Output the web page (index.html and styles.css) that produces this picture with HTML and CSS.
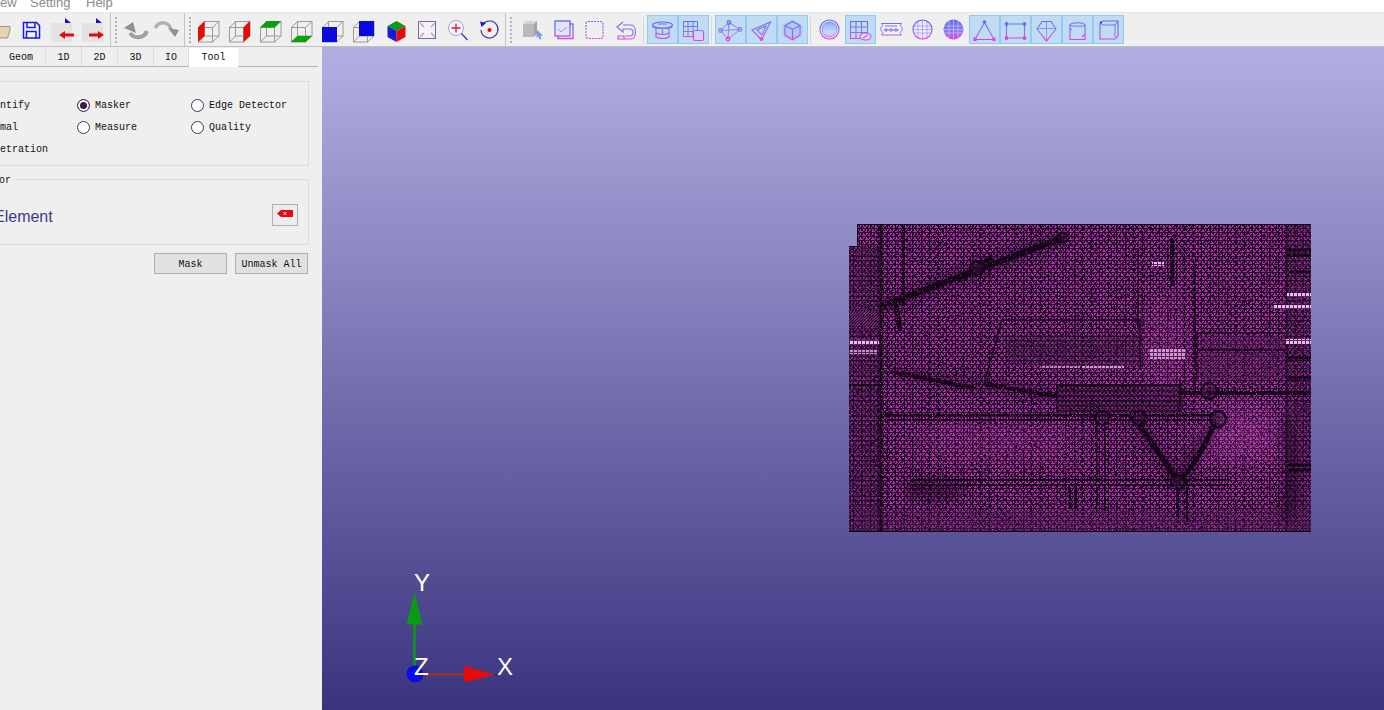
FILE: index.html
```html
<!DOCTYPE html>
<html lang="en">
<head>
<meta charset="utf-8">
<title>Mesh Tool</title>
<link rel="stylesheet" href="styles.css">
</head>
<body>
<svg class="defs" width="0" height="0" aria-hidden="true">
  <defs>
    <linearGradient id="g" gradientUnits="userSpaceOnUse" x1="0" y1="7" x2="0" y2="27">
      <stop offset="0" stop-color="#5f6cf2"/>
      <stop offset=".55" stop-color="#8a78ea"/>
      <stop offset="1" stop-color="#ea3ed8"/>
    </linearGradient>
    <linearGradient id="disc" gradientUnits="userSpaceOnUse" x1="0" y1="8" x2="0" y2="26">
      <stop offset="0" stop-color="#86a8f6"/>
      <stop offset=".6" stop-color="#c4d8f8"/>
      <stop offset="1" stop-color="#e8a8ec"/>
    </linearGradient>
    <symbol id="wire" overflow="visible">
      <g fill="none" stroke="#9a9a9a" stroke-width="1">
        <rect x=".5" y="6.5" width="14" height="14.5"/>
        <rect x="6.5" y=".5" width="14.5" height="14.5"/>
        <path d="M.5 6.500l6-6M14.500 6.500l6.500-6M.5 21l6-6M14.500 21l6.500-6"/>
      </g>
    </symbol>
    <pattern id="tri" width="6" height="8" patternUnits="userSpaceOnUse">
      <rect width="6" height="8" fill="#ac34a6"/>
      <path d="M0 .5H6M0 4.500H6M0 0L3 4L6 0M0 8L3 4L6 8" stroke="#2a0c30" stroke-width="1" fill="none" shape-rendering="crispEdges"/>
    </pattern>
    <pattern id="tri2" width="4" height="5" patternUnits="userSpaceOnUse">
      <rect width="4" height="5" fill="#8a2f88"/>
      <path d="M0 .5H4M0 0L2 3L4 0M0 5L2 3L4 5" stroke="#14061a" stroke-width="1" fill="none" shape-rendering="crispEdges"/>
    </pattern>
    <pattern id="vert" width="17" height="7" patternUnits="userSpaceOnUse">
      <path d="M3.500 0V5M11.500 2V7" stroke="#12061a" stroke-width="1" shape-rendering="crispEdges"/>
    </pattern>
    <pattern id="hatch" width="3" height="3" patternUnits="userSpaceOnUse">
      <rect width="3" height="3" fill="#7a2a7a"/>
      <path d="M0 3L3 0" stroke="#12061a" stroke-width="1"/>
    </pattern>
    <pattern id="bright" width="4" height="4" patternUnits="userSpaceOnUse">
      <rect width="4" height="4" fill="#f0b8f0"/>
      <path d="M0 .5H4M1 0V4" stroke="#5c2460" stroke-width="1" shape-rendering="crispEdges"/>
    </pattern>
    <filter id="specks" x="0" y="0" width="1" height="1" color-interpolation-filters="sRGB">
      <feTurbulence type="fractalNoise" baseFrequency=".85" numOctaves="2" seed="4"/>
      <feColorMatrix type="matrix" values="0 0 0 0 .1  0 0 0 0 .04  0 0 0 0 .12  14 0 0 0 -8.6"/>
    </filter>
    <filter id="dither" x="-5%" y="-5%" width="110%" height="110%" color-interpolation-filters="sRGB">
      <feTurbulence type="fractalNoise" baseFrequency=".8" numOctaves="2" seed="9" result="n"/>
      <feColorMatrix in="n" type="matrix" values="0 0 0 0 0  0 0 0 0 0  0 0 0 0 0  14 0 0 0 -4.5" result="m"/>
      <feComposite in="SourceGraphic" in2="m" operator="in"/>
    </filter>
    <filter id="soft" x="-20%" y="-20%" width="140%" height="140%"><feGaussianBlur stdDeviation="5"/></filter>
    <filter id="glow" x="-40%" y="-40%" width="180%" height="180%"><feGaussianBlur stdDeviation="14"/></filter>
    <clipPath id="meshclip"><path d="M857 224H1311V532H849V246H857Z"/></clipPath>
  </defs>
</svg>

<header class="menubar">
  <span class="menu-view">ew</span>
  <span class="menu-setting">Setting</span>
  <span class="menu-help">Help</span>
</header>

<nav class="toolbar">
  <div class="group first">
    <div class="tool clip"><svg class="ic shift" viewBox="1 3 29 27"><path d="M3 11.500h8l2 2h12v3.500l-2.500 8H3z" fill="#e6d6b0" stroke="#a09078"/></svg></div>
    <div class="tool"><svg class="ic" viewBox="1 3 29 27"><g fill="none" stroke="#1a1ad8" stroke-width="1.500"><path d="M7.500 9.500h13l3 3v12.500h-16z" fill="#f4f4ff"/><path d="M11 9.500v5h8v-5M10.500 25v-6.500h9.500V25"/></g></svg></div>
    <div class="tool gap-left"><svg class="ic" viewBox="1 3 29 27"><rect x="2" y="10" width="21" height="19" fill="#e3e3e3"/><path d="M16 5l6 5h-6z" fill="#1414d0"/><path d="M10 22l6-4v2.500h9v3h-9V26z" fill="#e80808"/></svg></div>
    <div class="tool narrow"><svg class="ic" viewBox="1 3 29 27"><rect x="2" y="10" width="21" height="19" fill="#e3e3e3"/><path d="M16 5l6 5h-6z" fill="#1414d0"/><path d="M24 22l-6-4v2.500H9v3h9V26z" fill="#e80808"/></svg></div>
  </div>

  <div class="group second">
    <i class="grip"></i>
    <div class="tool"><svg class="ic" viewBox="1 3 29 27"><path d="M27 18c-3 8-13 8-17 2" fill="none" stroke="#a0a0a0" stroke-width="4"/><path d="M4 15l9-6 3 11z" fill="#909090"/></svg></div>
    <div class="tool"><svg class="ic" viewBox="1 3 29 27"><path d="M4 15c4-7 13-7 16 1" fill="none" stroke="#b0b0b0" stroke-width="3.500"/><path d="M28 17l-11-2 7 9z" fill="#909090"/></svg></div>
  </div>

  <div class="group third">
    <i class="grip"></i>
    <div class="tool"><svg class="ic" viewBox="1 3 29 27"><g transform="translate(5 8)"><use href="#wire"/><path d="M0 6.500L6.500 0v15L0 21z" fill="#e60a0a"/></g></svg></div>
    <div class="tool"><svg class="ic" viewBox="1 3 29 27"><g transform="translate(5 8)"><use href="#wire"/><path d="M14.500 6.500L21 0v15l-6.500 6z" fill="#e60a0a"/></g></svg></div>
    <div class="tool"><svg class="ic" viewBox="1 3 29 27"><g transform="translate(5 8)"><use href="#wire"/><path d="M0 6.500L6.500 0H21l-6.500 6.500z" fill="#0aa00a"/></g></svg></div>
    <div class="tool"><svg class="ic" viewBox="1 3 29 27"><g transform="translate(5 8)"><use href="#wire"/><path d="M0 21l6.500-6H21l-6.500 6z" fill="#0aa00a"/></g></svg></div>
    <div class="tool"><svg class="ic" viewBox="1 3 29 27"><g transform="translate(5 8)"><use href="#wire"/><rect y="6" width="15" height="15" fill="#0a0ae0"/></g></svg></div>
    <div class="tool"><svg class="ic" viewBox="1 3 29 27"><g transform="translate(5 8)"><use href="#wire"/><rect x="6" width="15" height="15" fill="#0a0ae0"/></g></svg></div>
    <div class="tool gap-small"><svg class="ic" viewBox="1 3 29 27"><path d="M15.500 8l9 5-9 5-9-5z" fill="#0a9a1a"/><path d="M6.500 13l9 5v11l-9-5z" fill="#1818d8"/><path d="M24.500 13l-9 5v11l9-5z" fill="#e60a0a"/></svg></div>
    <div class="tool"><svg class="ic" viewBox="1 3 29 27"><rect x="6.500" y="8.500" width="17" height="17" fill="#f2f2f8" stroke="#6a6ab8"/><path d="M8 10l4 4M23 10l-4 4M8 24l4-4M23 24l-4-4" stroke="#e88888" stroke-width="1.300"/></svg></div>
    <div class="tool"><svg class="ic" viewBox="1 3 29 27"><circle cx="13" cy="15" r="7.500" fill="#f6f6ff" stroke="#a0a0d8"/><path d="M8.500 15h9M13 10.500v9" stroke="#e81010" stroke-width="1.300"/><path d="M18.500 20.500l6 6.500" stroke="#3a3ab0" stroke-width="1.300"/></svg></div>
    <div class="tool"><svg class="ic" viewBox="1 3 29 27"><path d="M9 11a8.500 8.500 0 1 1-2 6" fill="none" stroke="#3c3c9a" stroke-width="1.200"/><path d="M6 8.500l6 1.500-4.500 4z" fill="#1a1ac8"/><circle cx="15.500" cy="17" r="2" fill="#e00a0a"/></svg></div>
  </div>

  <div class="group fourth">
    <i class="grip"></i>
    <div class="tool"><svg class="ic" viewBox="1 3 29 27"><path d="M6 11l3-3h11l-3 3z" fill="#d4d4d4"/><path d="M6 11h11v13H6z" fill="#bababa"/><path d="M17 11l3-3v13l-3 3z" fill="#a4a4a4"/><path d="M20 17l6 5.500-2.500.5 1 3-2 .5-1-3-2 1.500z" fill="#7a9ae8"/></svg></div>
    <div class="tool"><svg class="ic" viewBox="1 3 29 27"><g fill="none" stroke="url(#g)" stroke-width="1.400"><rect x="7" y="8" width="15" height="15" fill="#e4e4f8"/><path d="M22 11h3v14.500H10V23"/><path d="M10 16l3 3 6-5" stroke-width=".8"/></g></svg></div>
    <div class="tool"><svg class="ic" viewBox="1 3 29 27"><rect x="7" y="8.500" width="17" height="17" rx="2" fill="none" stroke="url(#g)" stroke-width="1.200" stroke-dasharray="2 1"/></svg></div>
    <div class="tool"><svg class="ic" viewBox="1 3 29 27"><g fill="none" stroke="url(#g)" stroke-width="1.200"><path d="M13 9l-6 5 6 5v-3h7c4 0 4 7 0 7h-5"/><path d="M13 12h8c6 0 6 14 0 14H8M8 23h6v3H8z"/></g></svg></div>
    <i class="thin"></i>
    <div class="tool on"><svg class="ic" viewBox="1 3 29 27"><g fill="none" stroke="url(#g)" stroke-width="1.200"><ellipse cx="15.500" cy="12" rx="10" ry="3"/><path d="M6 12v2c3 2 16 2 19 0v-2M11 11h9"/><path d="M9 15v9c3 2 10 2 13 0v-9M15.500 15v6M9 20c3 2 10 2 13 0"/></g></svg></div>
    <div class="tool on"><svg class="ic" viewBox="1 3 29 27"><g fill="none" stroke="url(#g)" stroke-width="1"><path d="M5.500 8.500h14v15h-14zM10 8.500v15M15 8.500v15M5.500 13.500h14M5.500 18.500h14"/><rect x="15.500" y="17.500" width="10" height="10" rx="1.500" fill="#d8d4f0" stroke-width="1.200"/></g></svg></div>
    <i class="thin wide"></i>
    <div class="tool on"><svg class="ic" viewBox="1 3 29 27"><g fill="none" stroke="url(#g)" stroke-width="1.200"><path d="M14 9.500L25 16.500 13 26 5.500 17.500z M5.500 17.500L25 16.500 M14 9.500L13 26" stroke-width=".9"/><circle cx="14" cy="9.500" r="1.800"/><circle cx="25" cy="16.500" r="1.800"/><circle cx="5.500" cy="17.500" r="1.800"/><circle cx="13" cy="26" r="1.800"/></g></svg></div>
    <div class="tool on"><svg class="ic" viewBox="1 3 29 27"><g fill="none" stroke="url(#g)" stroke-width="1.200"><path d="M24.500 9L6 17l9.500 10zM20 13l-9 4 5 5z"/><circle cx="15.500" cy="26" r="1.300"/></g></svg></div>
    <div class="tool on"><svg class="ic" viewBox="1 3 29 27"><path d="M15.500 6.500l10 5.500v11l-10 5.500-10-5.500V12z" fill="#a8b8f0" opacity=".55"/><g fill="none" stroke="url(#g)" stroke-width="1.200"><path d="M15.500 8.500l7.500 4v9.500l-7.500 4.500-7.500-4.500v-9.500zM8 12.500l7.500 4 7.500-4M15.500 16.500v10"/></g></svg></div>
    <i class="thin wide"></i>
    <div class="tool"><svg class="ic" viewBox="1 3 29 27"><circle cx="15.500" cy="16.500" r="9.500" fill="#f0eeff" stroke="url(#g)" stroke-width="1.200"/><circle cx="15.500" cy="16.500" r="7.500" fill="url(#disc)" stroke="url(#g)" stroke-width=".8"/></svg></div>
    <div class="tool on"><svg class="ic" viewBox="1 3 29 27"><g fill="none" stroke="url(#g)" stroke-width="1.100"><path d="M5.500 8.500h17v17h-17zM11 8.500v17M16.500 8.500v17M5.500 14h17M5.500 19.500h17"/><ellipse cx="20.500" cy="23.500" rx="5.500" ry="3.500" fill="#e2dcf4"/><path d="M18 25l5-3"/></g></svg></div>
    <div class="tool"><svg class="ic" viewBox="1 3 29 27"><g fill="none" stroke="url(#g)" stroke-width="1"><path d="M5.500 10.500h20l-1.500 2 2 2v3l-2 2 1.500 2.500h-20l1.500-2.500-2-2v-3l2-2z" fill="#f4f2ff"/><path d="M9 13h12M8 17h15"/><circle cx="10" cy="17" r="1.300"/><circle cx="15" cy="17" r="1.300"/><circle cx="20" cy="17" r="1.300"/></g></svg></div>
    <div class="tool"><svg class="ic" viewBox="1 3 29 27"><circle cx="15.500" cy="16.500" r="9.500" fill="#eceaff" stroke="url(#g)" stroke-width="1.200"/><path d="M6 13h19M6 16.500h19M6 20h19M11 7.500v18M15.500 7v19M20 7.500v18" stroke="url(#g)" stroke-width=".5" fill="none"/></svg></div>
    <div class="tool"><svg class="ic" viewBox="1 3 29 27"><circle cx="15.500" cy="16.500" r="10" fill="url(#g)"/><path d="M6 13h19M6 16.500h19M6 20h19M11 7.500v18M15.500 7v19M20 7.500v18" stroke="#c8c8f8" stroke-width=".7" fill="none"/></svg></div>
    <div class="tool on"><svg class="ic" viewBox="1 3 29 27"><g fill="none" stroke="url(#g)" stroke-width="1.100"><path d="M15.500 9.500l-9.500 17h19z"/><circle cx="15.500" cy="9" r="1.300" fill="#6a6cf0"/><rect x="5" y="25" width="2" height="2.500" fill="#e040d8"/><rect x="24" y="25" width="2" height="2.500" fill="#e040d8"/></g></svg></div>
    <div class="tool on"><svg class="ic" viewBox="1 3 29 27"><g fill="none" stroke="url(#g)" stroke-width="1.200"><path d="M6.500 11h18v14h-18z"/><circle cx="6.500" cy="11" r="1.300" fill="#6a6cf0"/><circle cx="24.500" cy="11" r="1.300" fill="#6a6cf0"/><circle cx="6.500" cy="25" r="1.300" fill="#c04ade"/><circle cx="24.500" cy="25" r="1.300" fill="#c04ade"/></g></svg></div>
    <div class="tool on"><svg class="ic" viewBox="1 3 29 27"><g fill="none" stroke="url(#g)" stroke-width="1.100"><path d="M11 8.500h9l5 7.500-9.500 12L6 16z"/><path d="M15.500 8.500v19M6.500 15.500h18" stroke-width=".7"/></g></svg></div>
    <div class="tool on"><svg class="ic" viewBox="1 3 29 27"><g fill="none" stroke="url(#g)" stroke-width="1.200"><path d="M8 12c1-3 14-3 15 0v14.500H8zM8 12.500c3 1 12 1 15 0M8 16.500h2M23 21l-3 3"/></g></svg></div>
    <div class="tool on"><svg class="ic" viewBox="1 3 29 27"><g fill="none" stroke="url(#g)" stroke-width="1.200"><path d="M7 10l3-2h15v15l-3 3H7z"/><path d="M10 12h12v12M7 10l3 2M25 8l-3 4" stroke-width="1"/></g><circle cx="8" cy="9.500" r="1" fill="#2a2ae0"/></svg></div>
  </div>
</nav>

<main class="workspace">
  <aside class="panel">
    <div class="tabs">
      <span class="tab t-geom">Geom</span>
      <span class="tab">1D</span>
      <span class="tab">2D</span>
      <span class="tab">3D</span>
      <span class="tab t-io">IO</span>
      <span class="tab active">Tool</span>
    </div>
    <section class="box radios">
      <label class="radio"><i class="dot"></i>Identify</label>
      <label class="radio"><i class="dot sel"></i>Masker</label>
      <label class="radio"><i class="dot"></i>Edge Detector</label>
      <label class="radio"><i class="dot"></i>Normal</label>
      <label class="radio"><i class="dot"></i>Measure</label>
      <label class="radio"><i class="dot"></i>Quality</label>
      <label class="radio"><i class="dot"></i>Penetration</label>
    </section>
    <section class="box selector">
      <span class="legend">Selector</span>
      <span class="element">Element</span>
      <button class="erase" type="button" aria-label="Clear">
        <svg width="16" height="9" viewBox="0 0 16 9"><path d="M0 4.500L4 1h12v7H4z" fill="#e80814"/><path d="M6.500 3l3 3M9.500 3l-3 3" stroke="#fff" stroke-width="1"/></svg>
      </button>
    </section>
    <div class="actions">
      <button class="btn" type="button">Mask</button>
      <button class="btn" type="button">Unmask All</button>
    </div>
  </aside>

  <section class="viewport">
    <svg class="scene" viewBox="322 47 1062 663" width="1062" height="663">
      <g clip-path="url(#meshclip)">
        <rect x="849" y="224" width="462" height="308" fill="url(#tri)"/>
        <rect x="849" y="224" width="462" height="308" fill="url(#vert)"/>
        <!-- denser zones -->
        <rect x="849" y="246" width="32" height="286" fill="url(#tri2)" opacity=".45"/>
        <rect x="849" y="385" width="32" height="147" fill="url(#vert)"/>
        <rect x="1285" y="224" width="26" height="308" fill="url(#tri2)" opacity=".4"/>
        <rect x="1057" y="385" width="125" height="28" fill="url(#tri2)" opacity=".7"/>
        <rect x="1005" y="335" width="135" height="30" fill="url(#tri2)" opacity=".4"/>
        <rect x="1200" y="335" width="85" height="45" fill="url(#hatch)" opacity=".4"/>
        <rect x="855" y="510" width="456" height="22" fill="url(#hatch)" opacity=".35"/>
        <rect x="849" y="311" width="32" height="15" fill="url(#hatch)" opacity=".8"/>
        <!-- broad brightness and shade -->
        <ellipse cx="1240" cy="435" rx="45" ry="30" fill="#d850cc" opacity=".3" filter="url(#glow)"/>
        <ellipse cx="1000" cy="440" rx="90" ry="20" fill="#c848c0" opacity=".2" filter="url(#glow)"/>
        <ellipse cx="1165" cy="345" rx="22" ry="50" fill="#d850cc" opacity=".2" filter="url(#glow)"/>
        <g fill="none" stroke="#12061a" opacity=".4" filter="url(#soft)">
          <path d="M885 305L1062 238" stroke-width="12"/>
          <path d="M905 490H960" stroke-width="22"/>
          <path d="M892 372L1055 396" stroke-width="8"/>
          <path d="M1138 422L1178 482L1214 424" stroke-width="12"/>
          <path d="M1285 420Q1297 470 1285 520" stroke-width="14"/>
        </g>
        <rect x="849" y="224" width="462" height="308" filter="url(#specks)"/>
        <!-- structural lines -->
        <g fill="none" stroke="#140616" stroke-linecap="round" filter="url(#dither)">
          <path d="M885 305L1062 238" stroke-width="6"/>
          <path d="M960 280L990 258" stroke-width="5"/>
          <path d="M881 224V531" stroke-width="3"/>
          <path d="M903 224V305" stroke-width="2"/>
          <path d="M895 300L900 330" stroke-width="5"/>
          <path d="M892 372L972 388" stroke-width="4"/>
          <path d="M985 384L1055 396" stroke-width="4"/>
          <path d="M885 415H1215" stroke-width="2"/>
          <path d="M885 420H1215" stroke-width="2"/>
          <path d="M912 480H1228" stroke-width="2"/>
          <path d="M912 485H1228" stroke-width="2"/>
          <path d="M1138 422L1178 482" stroke-width="5"/>
          <path d="M1214 424Q1200 460 1178 482" stroke-width="5"/>
          <path d="M1097 420V482M1105 420V482" stroke-width="1.500"/>
          <path d="M1178 482V522M1187 482V522" stroke-width="2"/>
          <path d="M1070 488V508M1076 488V508M1097 488V510M1105 488V510" stroke-width="2"/>
          <path d="M1180 393H1310" stroke-width="4"/>
          <path d="M1057 385V412M1180 380V410M1057 385H1180" stroke-width="1.500"/>
          <path d="M1002 320H1140V368M1002 320L985 380" stroke-width="1.500"/>
          <path d="M1197 333H1285M1197 333V378M1197 350H1285" stroke-width="1.500"/>
          <path d="M1138 250V330M1195 265V395" stroke-width="1.500"/>
          <path d="M1172 240V285" stroke-width="4"/>
          <path d="M849 385H881" stroke-width="2"/>
          <path d="M1287 255H1311M1287 250H1311M1290 272H1311M1287 358H1311M1290 378H1311" stroke-width="3"/>
          <path d="M1290 470H1311M1290 465H1311" stroke-width="3"/>
          <path d="M1287 232V530" stroke-width="1"/>
        </g>
        <g fill="#3a143e" fill-opacity=".45" stroke="#14061a" stroke-width="2.500" filter="url(#dither)">
          <circle cx="1102" cy="418" r="7"/>
          <circle cx="1139" cy="418" r="7"/>
          <circle cx="1218" cy="419" r="8"/>
          <circle cx="1178" cy="482" r="7"/>
          <circle cx="1209" cy="391" r="8"/>
          <circle cx="1063" cy="238" r="5"/>
          <circle cx="977" cy="268" r="7"/>
        </g>
        <!-- bright patches -->
        <g>
          <rect x="849" y="340" width="30" height="5" fill="url(#bright)"/>
          <rect x="849" y="350" width="28" height="4" fill="url(#bright)" opacity=".75"/>
          <rect x="1287" y="293" width="24" height="4" fill="url(#bright)"/>
          <rect x="1274" y="305" width="37" height="4" fill="url(#bright)"/>
          <rect x="1286" y="339" width="25" height="5" fill="url(#bright)"/>
          <rect x="1150" y="349" width="35" height="10" fill="url(#bright)" opacity=".75"/>
          <rect x="1152" y="262" width="12" height="4" fill="url(#bright)"/>
          <rect x="1082" y="366" width="42" height="3" fill="url(#bright)" opacity=".8"/>
          <rect x="1040" y="366" width="40" height="2" fill="url(#bright)" opacity=".6"/>
        </g>
      </g>
      <path d="M849 246.500H857.500M857.500 246V224.500H1311M849 531.500H1311" stroke="#0c040e" fill="none"/>

      <path d="M414.500 674V620" stroke="#0a9a14" stroke-width="2.500"/>
      <path d="M414.500 592L422.500 624.500H406.500Z" fill="#0a9a14"/>
      <path d="M420 674.500H464" stroke="#a83010" stroke-width="2"/>
      <path d="M464 666L495 674.500L464 682.500Z" fill="#e60a0a"/>
      <path d="M495 674.500H497" stroke="#201010"/>
      <circle cx="415" cy="674" r="8.500" fill="#0a0ae6"/>
      <path d="M420 674H428" stroke="#fff" stroke-width="2"/>
      <text class="axis" x="414" y="591">Y</text>
      <text class="axis" x="414" y="675">Z</text>
      <text class="axis" x="497" y="675">X</text>
    </svg>
  </section>
</main>
</body>
</html>
```
FILE: styles.css
```css
* { box-sizing: border-box; }
html, body {
  margin: 0;
  width: 1384px;
  height: 710px;
  overflow: hidden;
  background: #efefef;
  font-family: "Liberation Mono", monospace;
}
.defs { position: absolute; }

.menubar {
  height: 13px;
  background: #fff;
  border-bottom: 1px solid #e6e6e6;
  overflow: hidden;
  display: flex;
  font: 13px/13px "Liberation Sans", sans-serif;
  color: #8a8a8a;
}
.menubar span { margin-top: -4px; }
.menu-view { width: 30px; }
.menu-setting { width: 56px; }

.toolbar {
  height: 34px;
  display: flex;
  background: #efefef;
  border-bottom: 1px solid #bfbfbf;
}
.group { display: flex; height: 33px; border-right: 1px solid #c4c4c4; }
.first { width: 111px; }
.second { width: 74px; padding-left: 4px; }
.third { width: 321px; padding-left: 4px; }
.fourth { border-right: 0; padding-left: 4px; }
.grip {
  width: 2px;
  height: 27px;
  margin: 4px 3px 0 0;
  background: repeating-linear-gradient(#b4b4b4 0 2px, transparent 2px 4px);
}
.third .grip { margin-right: 2px; }
.fourth .grip { margin-right: 5px; }
.tool {
  width: 31px;
  height: 29px;
  margin-top: 2px;
  border: 1px solid transparent;
  flex: none;
}
.tool.on { background: #c0dcf3; border-color: #90c8f6; }
.tool.clip { width: 16px; overflow: hidden; border: 0; padding-top: 1px; }
.tool.narrow { width: 30px; }
.gap-left { margin-left: 2px; }
.gap-small { margin-left: 2px; }
.ic { display: block; width: 29px; height: 27px; overflow: visible; }
.shift { margin-left: -14px; }
.thin { width: 1px; height: 27px; margin: 4px 3px 0 2px; background: #d8d8d8; flex: none; }

.workspace { display: flex; height: 663px; }
.panel { width: 322px; flex: none; background: #efefef; overflow: hidden; font-size: 10px; color: #111; }

.tabs {
  height: 20px;
  display: flex;
  width: 318px;
  border-bottom: 1px solid #c8aca6;
  line-height: 22px;
}
.tab { width: 36px; text-align: center; border-right: 1px solid #dcdcdc; height: 19px; }
.t-geom { width: 46px; padding-right: 3px; }
.t-io { width: 35px; }
.tab.active { width: 49px; background: #fff; border: 0; margin-top: 1px; height: 19px; line-height: 19px; }

.box {
  margin: 14px 13px 0 -37px;
  width: 346px;
  border: 1px solid #dcdcdc;
  position: relative;
}
.radios {
  height: 85px;
  padding-top: 12px;
  display: grid;
  grid-template-columns: 113px 114px 1fr;
  grid-auto-rows: 22px;
}
.radio { display: flex; align-items: center; height: 22px; white-space: nowrap; }
.dot {
  width: 13px;
  height: 13px;
  margin-right: 5px;
  border-radius: 50%;
  background: #fff;
  border: 1px solid #45305c;
  flex: none;
}
.dot.sel { box-shadow: inset 0 0 0 2px #fff; background: #3a1a48; }

.selector {
  height: 66px;
  margin-top: 13px;
  display: flex;
  align-items: center;
  justify-content: space-between;
  padding: 10px 10px 0 30px;
}
.legend {
  position: absolute;
  left: -1px;
  top: -5px;
  background: #efefef;
  padding-right: 4px;
  line-height: 12px;
}
.element {
  font: 16px/20px "Liberation Sans", sans-serif;
  color: #3c3c8c;
}
.erase {
  width: 26px;
  height: 22px;
  margin-top: -5px;
  background: #ececec;
  border: 1px solid #b0b0b0;
  padding: 0;
  display: flex;
  align-items: center;
  justify-content: center;
}
.erase svg { margin-top: -2px; }
.actions {
  display: flex;
  justify-content: flex-end;
  gap: 8px;
  margin: 8px 14px 0 0;
}
.btn {
  width: 73px;
  height: 21px;
  padding: 2px 0 0;
  background: #e1e1e1;
  border: 1px solid #adadad;
  font: 10px/17px "Liberation Mono", monospace;
  color: #111;
}

.viewport {
  flex: 1;
  background: linear-gradient(#b1afe2, #3a347f);
  overflow: hidden;
}
.scene { display: block; }
.axis { font: 24px "Liberation Sans", sans-serif; fill: #fff; }
```
